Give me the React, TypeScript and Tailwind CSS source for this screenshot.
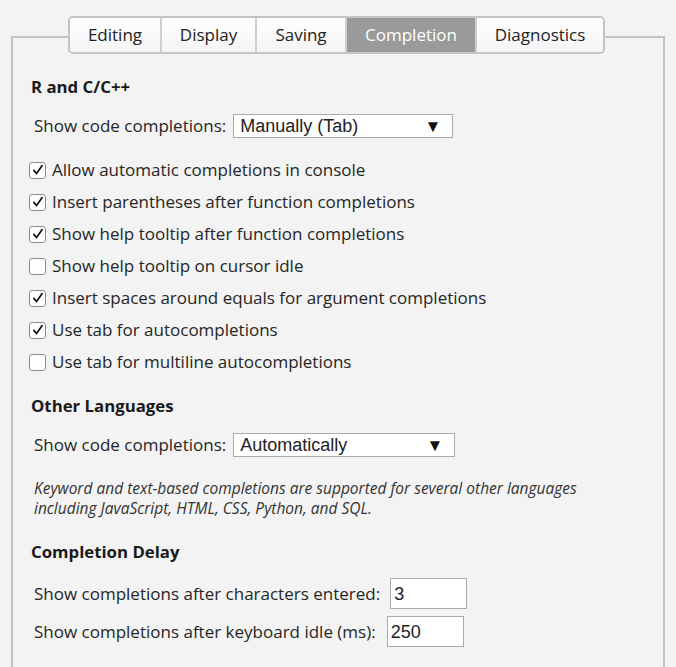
import React from 'react'

const tabs = [
  { label: 'Editing', w: 'w-[90px]' },
  { label: 'Display', w: 'w-[95px]' },
  { label: 'Saving', w: 'w-[90px]' },
  { label: 'Completion', w: 'w-[130px]', active: true },
  { label: 'Diagnostics', w: 'w-[128px]' },
]

const options = [
  { label: 'Allow automatic completions in console', checked: true },
  { label: 'Insert parentheses after function completions', checked: true },
  { label: 'Show help tooltip after function completions', checked: true },
  { label: 'Show help tooltip on cursor idle', checked: false },
  { label: 'Insert spaces around equals for argument completions', checked: true },
  { label: 'Use tab for autocompletions', checked: true },
  { label: 'Use tab for multiline autocompletions', checked: false },
]

const Checkbox = ({ checked }: { checked: boolean }) => (
  <span className="flex h-[17px] w-[17px] shrink-0 items-center justify-center rounded-[3px] border-[1.5px] border-[#8c8c8c] bg-white">
    {checked && (
      <svg width="12" height="12" viewBox="0 0 12 12">
        <path d="M1.8 6.4 L4.6 9.6 L10.2 1.6" fill="none" stroke="#111" strokeWidth="1.7" strokeLinecap="round" strokeLinejoin="round" />
      </svg>
    )}
  </span>
)

const Select = ({ value, w }: { value: string; w: string }) => (
  <div className={`flex h-[24px] ${w} items-center justify-between border border-[#ababab] bg-white pl-[6px] pr-[11px] font-['Liberation_Sans',Arial,sans-serif] text-[18px] leading-[22px] text-[#222]`}>
    <span>{value}</span>
    <span className="text-[17px] leading-none text-[#111]">▼</span>
  </div>
)

const NumberBox = ({ value }: { value: string }) => (
  <div className="flex h-[31px] w-[77px] items-center border border-[#ababab] bg-white px-[3px] font-['Liberation_Sans',Arial,sans-serif] text-[18px] text-[#222]">
    {value}
  </div>
)

const App = () => {
  return (
    <div className="h-[667px] w-[676px] overflow-hidden bg-[#f2f3f2] px-[11px] pt-[36px] font-['Open_Sans','Noto_Sans',sans-serif] text-[17px] leading-[24px] text-[#262626]">
      <div className="h-[700px] border-2 border-b-0 border-[#c2c2c2]">
        {/* tab strip sits on top of the frame line */}
        <div className="ml-[55px] -mt-[22px] flex w-fit overflow-hidden rounded-[5px] border-2 border-[#c4c4c4] bg-white">
          {tabs.map((t, i) => (
            <div
              key={t.label}
              className={`flex h-[34px] ${t.w} items-center justify-center text-[17px] ${
                i > 0 ? 'border-l-2 border-[#cfcfcf]' : ''
              } ${t.active ? 'bg-[#9a9a9a] text-white' : 'bg-gradient-to-b from-white to-[#f4f4f4] text-[#222]'}`}
            >
              {t.label}
            </div>
          ))}
        </div>

        <div className="pl-[18px]">
          <div className="mt-[21px] flex h-[24px] items-center text-[16.8px] font-bold text-[#1a1a1a]">R and C/C++</div>

          <div className="mt-[15px] flex h-[24px] items-center gap-[7px] pl-[3px]">
            <span>Show code completions:</span>
            <Select value="Manually (Tab)" w="w-[220px]" />
          </div>

          <div className="-ml-[2px] mt-[16px] flex flex-col">
            {options.map((o) => (
              <div key={o.label} className="flex h-[32px] items-center gap-[6px]">
                <Checkbox checked={o.checked} />
                <span>{o.label}</span>
              </div>
            ))}
          </div>

          <div className="mt-[16px] flex h-[24px] items-center text-[16.8px] font-bold text-[#1a1a1a]">Other Languages</div>

          <div className="mt-[15px] flex h-[24px] items-center gap-[7px] pl-[3px]">
            <span>Show code completions:</span>
            <Select value="Automatically" w="w-[222px]" />
          </div>

          <p className="mt-[21px] pl-[3px] text-[15.5px] leading-[20px] italic text-[#333]">
            Keyword and text-based completions are supported for several other languages
            <br />
            including JavaScript, HTML, CSS, Python, and SQL.
          </p>

          <div className="mt-[22px] flex h-[24px] items-center text-[16.8px] font-bold text-[#1a1a1a]">Completion Delay</div>

          <div className="mt-[14px] flex flex-col gap-[7px] pl-[3px]">
            <div className="flex h-[31px] items-center gap-[10px]">
              <span>Show completions after characters entered:</span>
              <NumberBox value="3" />
            </div>
            <div className="flex h-[31px] items-center gap-[11px]">
              <span>Show completions after keyboard idle (ms):</span>
              <NumberBox value="250" />
            </div>
          </div>
        </div>
      </div>
    </div>
  )
}

export default App
